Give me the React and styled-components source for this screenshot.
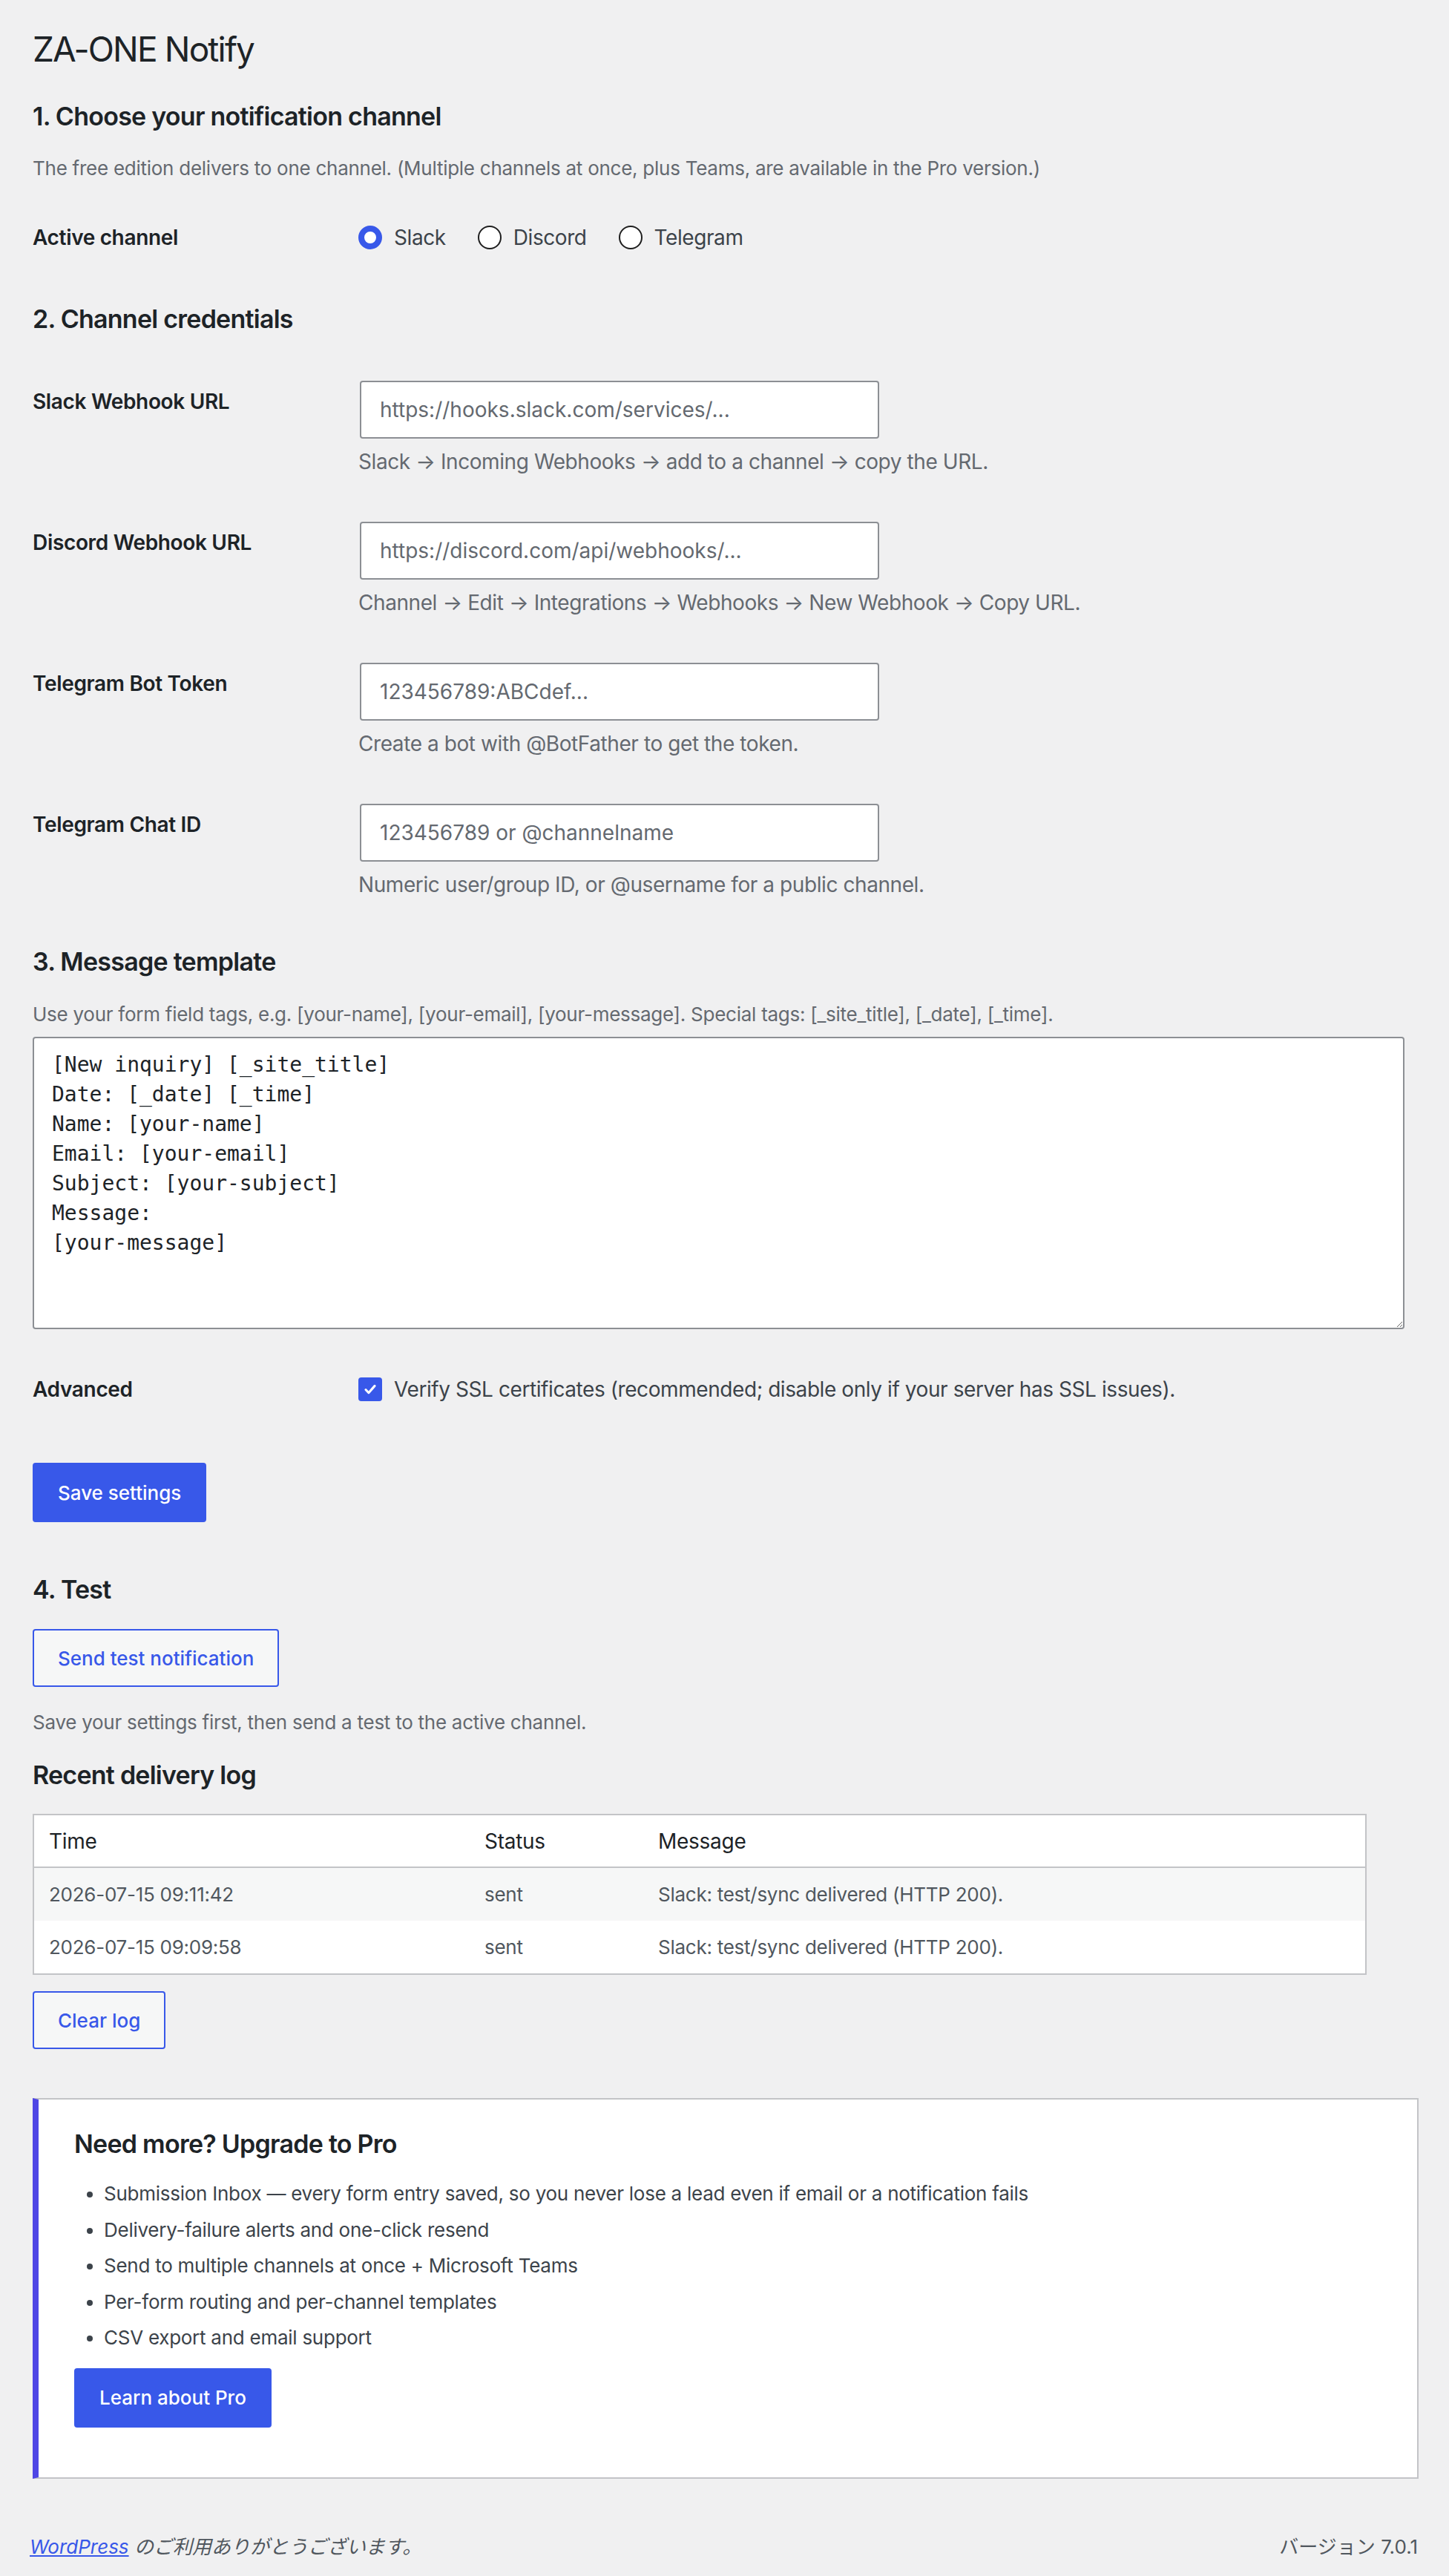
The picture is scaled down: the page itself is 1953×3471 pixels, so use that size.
import React from "react";
import styled, { createGlobalStyle } from "styled-components";

const colors = {
  page: "#f0f0f1",
  heading: "#1d2327",
  text: "#3c434a",
  muted: "#646970",
  cell: "#50575e",
  blue: "#3858e9",
  indigo: "#4f46e5",
  border: "#c3c4c7",
  field: "#8c8f94",
};

const GlobalStyle = createGlobalStyle`
  body {
    margin: 0;
    background: ${colors.page};
    color: ${colors.text};
    font-family: Inter, "Noto Sans", "Noto Sans CJK JP", sans-serif;
    font-size: 26px;
  }
  * { box-sizing: border-box; }
`

const Wrap = styled.div`
  padding: 36px 41px 0 44px;
`

const PageTitle = styled.h1`
  margin: 0;
  font-size: 46px;
  font-weight: 400;
  line-height: 60px;
  letter-spacing: -0.04em;
  color: ${colors.heading};
`

const SectionTitle = styled.h2`
  margin: ${(p) => p.$top}px 0 0;
  font-size: 34px;
  font-weight: 600;
  line-height: 48px;
  letter-spacing: -0.022em;
  color: ${colors.heading};
`

const Description = styled.p`
  margin: ${(p) => p.$top || 0}px 0 0;
  font-size: 26px;
  line-height: 40px;
  letter-spacing: -0.01em;
  color: ${colors.muted};
`

const FormRow = styled.div`
  display: grid;
  grid-template-columns: 439px 1fr;
  margin-top: ${(p) => p.$top}px;
`

const RowLabel = styled.div`
  padding-top: ${(p) => p.$pad || 0}px;
  font-size: 28px;
  font-weight: 600;
  line-height: 40px;
  letter-spacing: -0.012em;
  color: ${colors.heading};
`

const Options = styled.div`
  display: flex;
  align-items: center;
  gap: 43px;
  height: 40px;
`

const Option = styled.label`
  display: flex;
  align-items: center;
  gap: 16px;
  font-size: 28px;
  line-height: 40px;
  letter-spacing: -0.015em;
  color: ${colors.text};
`

const Radio = styled.span`
  width: 32px;
  height: 32px;
  border-radius: 50%;
  flex: none;
  border: ${(p) => (p.$on ? `8px solid ${colors.blue}` : "2px solid #1e1e1e")};
  background: #fff;
`

const CheckBox = styled.span`
  width: 32px;
  height: 32px;
  flex: none;
  border-radius: 4px;
  background: ${colors.blue};
  display: flex;
  align-items: center;
  justify-content: center;
`

const Field = styled.div`
  display: flex;
  flex-direction: column;
  align-items: flex-start;
`

const TextInput = styled.input`
  width: 700px;
  height: 78px;
  margin: 0 0 0 2px;
  padding: 0 25px;
  border: 2px solid ${colors.field};
  border-radius: 4px;
  background: #fff;
  font-family: inherit;
  font-size: 28px;
  color: ${colors.heading};

  &::placeholder {
    color: ${colors.muted};
  }
`

const Help = styled.p`
  margin: 11px 0 0;
  font-size: 28px;
  line-height: 40px;
  letter-spacing: -0.015em;
  color: ${colors.muted};
`

const Template = styled.textarea`
  display: block;
  width: 99%;
  height: 394px;
  margin-top: 10px;
  padding: 16px 24px;
  border: 2px solid ${colors.field};
  border-radius: 4px;
  background: #fff;
  font-family: "DejaVu Sans Mono", "Liberation Mono", monospace;
  font-size: 28px;
  line-height: 40px;
  color: ${colors.heading};
  resize: vertical;
`

const Button = styled.button`
  display: block;
  height: ${(p) => (p.$primary ? 80 : 78)}px;
  margin-top: ${(p) => p.$top}px;
  padding: 0 32px;
  border: 2px solid ${colors.blue};
  border-radius: 4px;
  background: ${(p) => (p.$primary ? colors.blue : "#f6f7f7")};
  color: ${(p) => (p.$primary ? "#fff" : colors.blue)};
  font-family: inherit;
  font-size: 26px;
  font-weight: 500;
  cursor: pointer;
`

const LogTable = styled.table`
  width: 1798px;
  margin-top: 28px;
  border-collapse: collapse;
  border: 2px solid ${colors.border};
  background: #fff;
  table-layout: fixed;
`

const HeadCell = styled.th`
  height: 71px;
  padding: 0 20px;
  text-align: left;
  font-size: 28px;
  font-weight: 400;
  letter-spacing: -0.01em;
  color: ${colors.heading};
  border-bottom: 2px solid ${colors.border};
`

const LogRow = styled.tr`
  background: ${(p) => (p.$alt ? "#f6f7f7" : "#fff")};
`

const Cell = styled.td`
  height: 72px;
  padding: 0 20px;
  font-size: 26px;
  letter-spacing: -0.01em;
  color: ${colors.cell};
`

const ProBox = styled.div`
  margin-top: 66px;
  padding: 36px 48px 67px;
  background: #fff;
  border: 2px solid ${colors.border};
  border-left: 8px solid ${colors.indigo};
`

const ProList = styled.ul`
  margin: 25px 0 22px;
  padding-left: 40px;
  list-style: disc;

  li {
    font-size: 26px;
    line-height: 36.5px;
    margin-bottom: 12px;
    letter-spacing: -0.01em;
    color: ${colors.text};
  }
`

const Footer = styled.div`
  display: flex;
  justify-content: space-between;
  margin-top: 72px;
  padding: 0 42px 19px 40px;
  font-size: 26px;
  line-height: 40px;
  color: ${colors.cell};
`

const Thanks = styled.span`
  font-style: italic;

  a {
    color: ${colors.blue};
  }
`

const credentials = [
  {
    label: "Slack Webhook URL",
    placeholder: "https://hooks.slack.com/services/...",
    help: "Slack → Incoming Webhooks → add to a channel → copy the URL.",
  },
  {
    label: "Discord Webhook URL",
    placeholder: "https://discord.com/api/webhooks/...",
    help: "Channel → Edit → Integrations → Webhooks → New Webhook → Copy URL.",
  },
  {
    label: "Telegram Bot Token",
    placeholder: "123456789:ABCdef...",
    help: "Create a bot with @BotFather to get the token.",
  },
  {
    label: "Telegram Chat ID",
    placeholder: "123456789 or @channelname",
    help: "Numeric user/group ID, or @username for a public channel.",
  },
]

const template = `[New inquiry] [_site_title]
Date: [_date] [_time]
Name: [your-name]
Email: [your-email]
Subject: [your-subject]
Message:
[your-message]`

const log = [
  { time: "2026-07-15 09:11:42", status: "sent", message: "Slack: test/sync delivered (HTTP 200)." },
  { time: "2026-07-15 09:09:58", status: "sent", message: "Slack: test/sync delivered (HTTP 200)." },
]

const proFeatures = [
  "Submission Inbox — every form entry saved, so you never lose a lead even if email or a notification fails",
  "Delivery-failure alerts and one-click resend",
  "Send to multiple channels at once + Microsoft Teams",
  "Per-form routing and per-channel templates",
  "CSV export and email support",
]

export default function App() {
  return (
    <>
      <GlobalStyle />
      <Wrap>
        <PageTitle>ZA-ONE Notify</PageTitle>

        <SectionTitle $top={37}>1. Choose your notification channel</SectionTitle>
        <Description $top={26}>
          The free edition delivers to one channel. (Multiple channels at once, plus Teams, are available in the Pro version.)
        </Description>
        <FormRow $top={53}>
          <RowLabel>Active channel</RowLabel>
          <Options>
            {["Slack", "Discord", "Telegram"].map((name, i) => (
              <Option key={name}>
                <Radio $on={i === 0} />
                {name}
              </Option>
            ))}
          </Options>
        </FormRow>

        <SectionTitle $top={66}>2. Channel credentials</SectionTitle>
        {credentials.map((c, i) => (
          <FormRow key={c.label} $top={i === 0 ? 59 : 61}>
            <RowLabel $pad={8}>{c.label}</RowLabel>
            <Field>
              <TextInput placeholder={c.placeholder} />
              <Help>{c.help}</Help>
            </Field>
          </FormRow>
        ))}

        <SectionTitle $top={60}>3. Message template</SectionTitle>
        <Description $top={27}>
          Use your form field tags, e.g. [your-name], [your-email], [your-message]. Special tags: [_site_title], [_date], [_time].
        </Description>
        <Template defaultValue={template} />

        <FormRow $top={61}>
          <RowLabel>Advanced</RowLabel>
          <Option>
            <CheckBox>
              <svg width="22" height="22" viewBox="0 0 20 20">
                <path d="M4.5 10.5l3.6 3.8L15.5 5.8" fill="none" stroke="#fff" strokeWidth="2.8" strokeLinecap="round" strokeLinejoin="round" />
              </svg>
            </CheckBox>
            Verify SSL certificates (recommended; disable only if your server has SSL issues).
          </Option>
        </FormRow>

        <Button $primary $top={79}>Save settings</Button>

        <SectionTitle $top={67}>4. Test</SectionTitle>
        <Button $top={29}>Send test notification</Button>
        <Description $top={28}>Save your settings first, then send a test to the active channel.</Description>

        <SectionTitle $top={27}>Recent delivery log</SectionTitle>
        <LogTable>
          <colgroup>
            <col style={{ width: 588 }} />
            <col style={{ width: 234 }} />
            <col />
          </colgroup>
          <thead>
            <tr>
              <HeadCell>Time</HeadCell>
              <HeadCell>Status</HeadCell>
              <HeadCell>Message</HeadCell>
            </tr>
          </thead>
          <tbody>
            {log.map((row, i) => (
              <LogRow key={row.time} $alt={i % 2 === 0}>
                <Cell>{row.time}</Cell>
                <Cell>{row.status}</Cell>
                <Cell>{row.message}</Cell>
              </LogRow>
            ))}
          </tbody>
        </LogTable>
        <Button $top={22}>Clear log</Button>

        <ProBox>
          <SectionTitle $top={0}>Need more? Upgrade to Pro</SectionTitle>
          <ProList>
            {proFeatures.map((f) => (
              <li key={f}>{f}</li>
            ))}
          </ProList>
          <Button $primary $top={0}>Learn about Pro</Button>
        </ProBox>
      </Wrap>
      <Footer>
        <Thanks>
          <a href="#">WordPress</a> のご利用ありがとうございます。
        </Thanks>
        <span>バージョン 7.0.1</span>
      </Footer>
    </>
  )
}
